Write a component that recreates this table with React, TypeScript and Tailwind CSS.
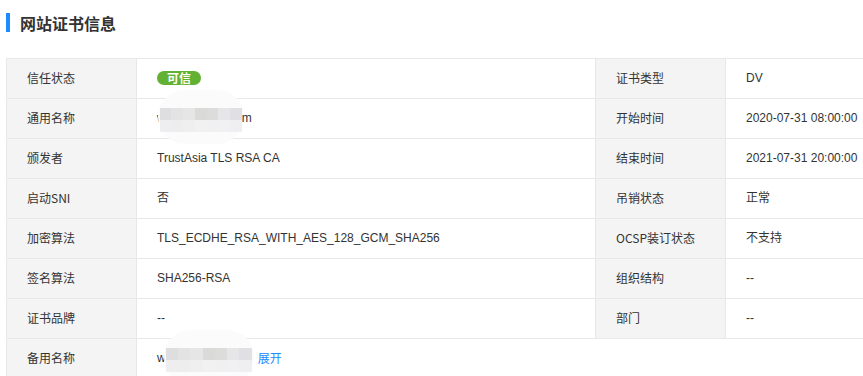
import React from "react";

const cn = "font-['Noto_Sans_CJK_SC','Noto_Sans',sans-serif]";

// Mosaic placeholder that hides part of the domain
function Mosaic({ width, className }: { width: number; className?: string }) {
  const top = ["#dedde0", "#e3e3e3", "#e6e6e6", "#dadad9", "#dcdcdb", "#e6e6e8", "#e0dfe4"];
  const bottom = ["#eeeef0", "#ededed", "#efefef", "#f1f1f1", "#f0f0f1", "#f1f1f3", "#efeff2"];
  return (
    <span className={`relative inline-block h-[12px] align-middle ${className ?? ""}`} style={{ width }}>
      <span className="absolute left-[-2px] right-[-2px] top-[-22px] bottom-[-20px] rounded-[40px] bg-[#fbfbfc]" />
      <span className="absolute inset-x-0 top-[-4px] flex">
        {top.map((c, i) => (
          <span key={i} className="h-[12px] flex-1" style={{ backgroundColor: c }} />
        ))}
      </span>
      <span className="absolute inset-x-0 top-[8px] flex">
        {bottom.map((c, i) => (
          <span key={i} className="h-[12px] flex-1" style={{ backgroundColor: c }} />
        ))}
      </span>
    </span>
  );
}

function Label({ children }: { children: React.ReactNode }) {
  return (
    <div className={`h-10 flex items-center pl-5 pb-px bg-[#f4f4f4] border-r border-b border-[#e8e8e8] text-[12px] text-[#333] ${cn}`}>
      {children}
    </div>
  );
}

function Value({ children, wide }: { children: React.ReactNode; wide?: boolean }) {
  return (
    <div
      className={`h-10 flex items-center pl-5 pb-px bg-white border-r border-b border-[#e8e8e8] text-[12px] text-[#333] font-['Liberation_Sans','Noto_Sans_CJK_SC',sans-serif] ${wide ? "col-span-3" : ""}`}
    >
      {children}
    </div>
  );
}

export default function App() {
  const rows: [string, React.ReactNode, string, string][] = [
    [
      "信任状态",
      <span className={`inline-flex items-center justify-center w-[44px] h-[14px] rounded-full bg-[#62b132] text-white text-[12px] font-bold leading-none ${cn}`}>
        可信
      </span>,
      "证书类型",
      "DV",
    ],
    [
      "通用名称",
      <span className="flex items-center">
        w<Mosaic width={82} className="ml-[-6px]" />
        <span className="relative">m</span>
      </span>,
      "开始时间",
      "2020-07-31 08:00:00",
    ],
    ["颁发者", "TrustAsia TLS RSA CA", "结束时间", "2021-07-31 20:00:00"],
    ["启动SNI", "否", "吊销状态", "正常"],
    ["加密算法", "TLS_ECDHE_RSA_WITH_AES_128_GCM_SHA256", "OCSP装订状态", "不支持"],
    ["签名算法", "SHA256-RSA", "组织结构", "--"],
    ["证书品牌", "--", "部门", "--"],
  ];

  return (
    <div className="w-full h-[376px] overflow-hidden bg-white">
      <div className="flex items-center gap-[10px] pl-[6px] pt-[13px] h-[32px]">
        <span className="w-[4px] h-[19px] bg-[#1a8cff]" />
        <h2 className={`text-[16px] font-bold text-[#333] leading-none ${cn}`}>网站证书信息</h2>
      </div>
      <div className="ml-[6px] mt-[26px] w-[880px] grid grid-cols-[130px_459px_130px_1fr] border-t border-l border-[#e8e8e8]">
        {rows.map(([l1, v1, l2, v2]) => (
          <React.Fragment key={l1}>
            <Label>{l1}</Label>
            <Value>{v1}</Value>
            <Label>{l2}</Label>
            <Value>{v2}</Value>
          </React.Fragment>
        ))}
        <Label>备用名称</Label>
        <Value wide>
          <span className="flex items-center">
            w<Mosaic width={86} />
            <span className={`relative ml-[6px] text-[#1a8cff] ${cn}`}>展开</span>
          </span>
        </Value>
      </div>
    </div>
  );
}
